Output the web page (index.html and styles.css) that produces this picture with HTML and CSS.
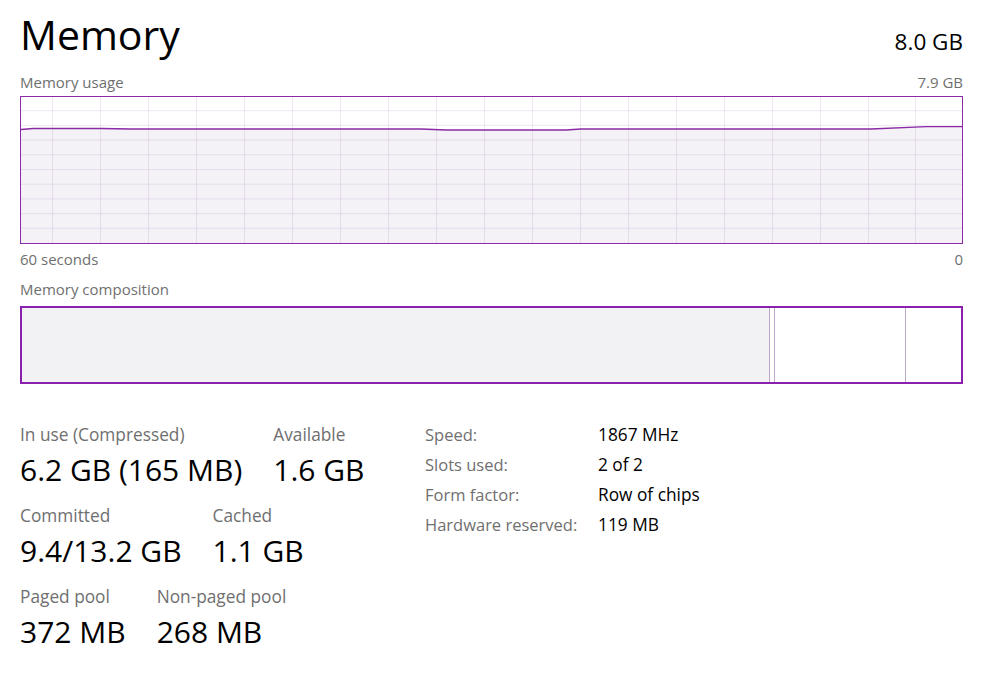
FILE: index.html
```html
<!DOCTYPE html>
<html lang="en">
<head>
<meta charset="utf-8">
<title>Memory</title>
<link rel="stylesheet" href="styles.css">
</head>
<body>
<div class="page">
  <header class="head">
    <h1 class="title">Memory</h1>
    <div class="total">8.0 GB</div>
  </header>

  <div class="caption-row caption-top">
    <span>Memory usage</span>
    <span>7.9 GB</span>
  </div>
  <div class="graph">
    <svg class="graph-svg" viewBox="0 0 941 146" preserveAspectRatio="none" width="941" height="146">
      <polygon class="area" points="0,32.5 12,31.5 80,31.5 110,32 400,32 425,33 545,33 560,32 850,32 905,29.7 941,29.7 941,146 0,146"/>
      <g class="grid">
        <line x1="0" y1="13.7" x2="941" y2="13.7"/>
        <line x1="0" y1="28.4" x2="941" y2="28.4"/>
        <line x1="0" y1="43.1" x2="941" y2="43.1"/>
        <line x1="0" y1="57.8" x2="941" y2="57.8"/>
        <line x1="0" y1="72.5" x2="941" y2="72.5"/>
        <line x1="0" y1="87.2" x2="941" y2="87.2"/>
        <line x1="0" y1="101.9" x2="941" y2="101.9"/>
        <line x1="0" y1="116.6" x2="941" y2="116.6"/>
        <line x1="0" y1="131.3" x2="941" y2="131.3"/>
        <line x1="31.5" y1="0" x2="31.5" y2="146"/>
        <line x1="79.5" y1="0" x2="79.5" y2="146"/>
        <line x1="127.5" y1="0" x2="127.5" y2="146"/>
        <line x1="175.5" y1="0" x2="175.5" y2="146"/>
        <line x1="223.5" y1="0" x2="223.5" y2="146"/>
        <line x1="271.5" y1="0" x2="271.5" y2="146"/>
        <line x1="319.5" y1="0" x2="319.5" y2="146"/>
        <line x1="367.5" y1="0" x2="367.5" y2="146"/>
        <line x1="415.5" y1="0" x2="415.5" y2="146"/>
        <line x1="463.5" y1="0" x2="463.5" y2="146"/>
        <line x1="511.5" y1="0" x2="511.5" y2="146"/>
        <line x1="559.5" y1="0" x2="559.5" y2="146"/>
        <line x1="607.5" y1="0" x2="607.5" y2="146"/>
        <line x1="655.5" y1="0" x2="655.5" y2="146"/>
        <line x1="703.5" y1="0" x2="703.5" y2="146"/>
        <line x1="751.5" y1="0" x2="751.5" y2="146"/>
        <line x1="799.5" y1="0" x2="799.5" y2="146"/>
        <line x1="847.5" y1="0" x2="847.5" y2="146"/>
        <line x1="894.5" y1="0" x2="894.5" y2="146"/>
      </g>
      <polyline class="trace" points="0,32.5 12,31.5 80,31.5 110,32 400,32 425,33 545,33 560,32 850,32 905,29.7 941,29.7"/>
    </svg>
  </div>
  <div class="caption-row caption-axis">
    <span>60 seconds</span>
    <span>0</span>
  </div>

  <div class="caption-row caption-comp">
    <span>Memory composition</span>
  </div>
  <div class="composition">
    <div class="seg seg-inuse"></div>
    <div class="seg seg-modified"></div>
    <div class="seg seg-standby"></div>
    <div class="seg seg-free"></div>
  </div>

  <section class="details">
    <div class="stats">
      <div class="stat-row">
        <div class="stat">
          <div class="stat-label">In use (Compressed)</div>
          <div class="stat-value">6.2 GB (165 MB)</div>
        </div>
        <div class="stat">
          <div class="stat-label">Available</div>
          <div class="stat-value">1.6 GB</div>
        </div>
      </div>
      <div class="stat-row">
        <div class="stat">
          <div class="stat-label">Committed</div>
          <div class="stat-value">9.4/13.2 GB</div>
        </div>
        <div class="stat">
          <div class="stat-label">Cached</div>
          <div class="stat-value">1.1 GB</div>
        </div>
      </div>
      <div class="stat-row">
        <div class="stat">
          <div class="stat-label">Paged pool</div>
          <div class="stat-value">372 MB</div>
        </div>
        <div class="stat">
          <div class="stat-label">Non-paged pool</div>
          <div class="stat-value">268 MB</div>
        </div>
      </div>
    </div>

    <dl class="info">
      <div class="info-row"><dt>Speed:</dt><dd>1867 MHz</dd></div>
      <div class="info-row"><dt>Slots used:</dt><dd>2 of 2</dd></div>
      <div class="info-row"><dt>Form factor:</dt><dd>Row of chips</dd></div>
      <div class="info-row"><dt>Hardware reserved:</dt><dd>119 MB</dd></div>
    </dl>
  </section>
</div>
</body>
</html>
```

FILE: styles.css
```css
* { box-sizing: border-box; }

html, body {
  margin: 0;
  padding: 0;
  background: #ffffff;
}

body {
  font-family: "Open Sans", "Noto Sans", "Liberation Sans", sans-serif;
  color: #000000;
}

.page {
  padding: 13px 26px 0 20px;
  width: 989px;
}

.head {
  display: flex;
  justify-content: space-between;
  align-items: baseline;
  height: 42px;
}

.title {
  margin: 0;
  font-size: 41px;
  font-weight: 400;
  line-height: 42px;
  color: #000;
}

.total {
  font-size: 22.5px;
  line-height: 42px;
  color: #000;
}

.caption-row {
  display: flex;
  justify-content: space-between;
  font-size: 15px;
  line-height: 18px;
  color: #6f6f6f;
}

.caption-top { margin-top: 18px; }
.caption-axis { margin-top: 6px; }
.caption-comp { margin-top: 12px; }

.graph {
  margin-top: 5px;
  width: 943px;
  height: 148px;
  border: 1px solid #8a2aa6;
  background: #ffffff;
}

.graph-svg {
  display: block;
  width: 941px;
  height: 146px;
}

.graph-svg .area {
  fill: #f4f1f7;
}

.graph-svg .grid line {
  stroke: rgba(160, 120, 175, 0.17);
  stroke-width: 1;
}

.graph-svg .trace {
  fill: none;
  stroke: #8a2aa6;
  stroke-width: 1.3;
}

.composition {
  margin-top: 8px;
  width: 943px;
  height: 78px;
  border: 2px solid #8b1fae;
  display: flex;
}

.seg {
  height: 100%;
  border-right: 1px solid #bfa9cb;
}

.seg-inuse { width: 748px; background: #f2f1f3; }
.seg-modified { width: 5px; background: #ffffff; }
.seg-standby { width: 131px; background: #ffffff; }
.seg-free { flex: 1; border-right: none; background: #ffffff; }

.details {
  display: flex;
  align-items: flex-start;
  margin-top: 41px;
}

.stats {
  display: flex;
  flex-direction: column;
  gap: 16px;
  width: 405px;
}

.stat-row {
  display: flex;
  gap: 31px;
}

.stat-label {
  font-size: 17.3px;
  line-height: 20px;
  color: #6f6f6f;
}

.stat-value {
  margin-top: 5px;
  font-size: 30px;
  line-height: 40px;
  color: #000;
}

.info {
  margin: -5px 0 0 0;
}

.info-row {
  display: flex;
  font-size: 16.5px;
  line-height: 30px;
}

.info-row dt {
  width: 173px;
  color: #6f6f6f;
}

.info-row dd {
  margin: 0;
  font-size: 17.3px;
  color: #000;
}
```
